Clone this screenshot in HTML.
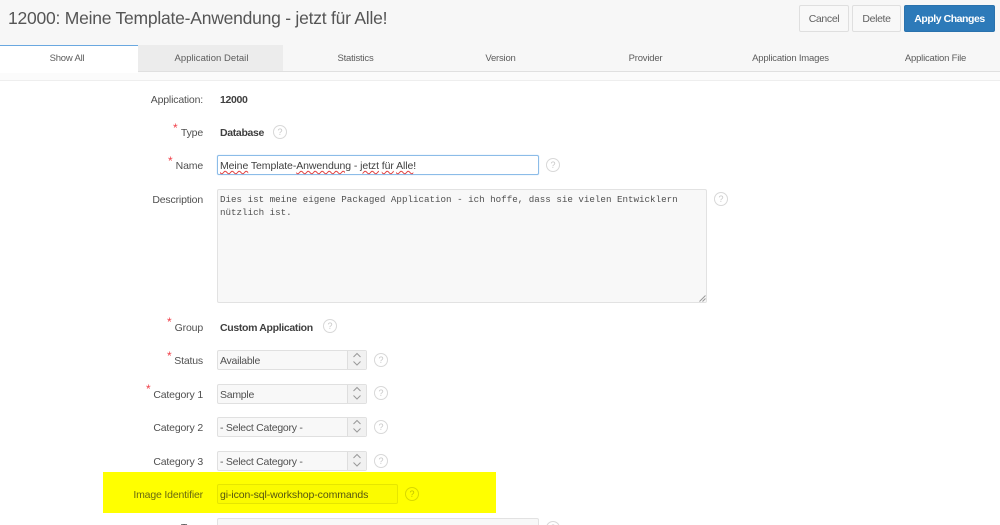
<!DOCTYPE html>
<html><head><meta charset="utf-8"><style>
html,body{margin:0;padding:0;width:1000px;height:525px;overflow:hidden;background:#fff}
body{font-family:"Liberation Sans",sans-serif;color:#404040;font-size:10.5px}
#w{left:0;top:0;width:1000px;height:525px;overflow:hidden;background:#fff;filter:blur(.35px)}
div{position:absolute;box-sizing:border-box;white-space:nowrap}
.tab{top:46px;height:25px;line-height:26px;text-align:center;font-size:9.5px;letter-spacing:-.2px;color:#5c5c5c}
.l{left:50px;width:153px;text-align:right;font-size:10.5px;letter-spacing:-.17px;color:#505050;height:14px;line-height:14px}
.v{left:220px;font-weight:bold;font-size:10.5px;letter-spacing:-.33px;color:#404040;height:14px;line-height:14px}
.s{left:217px;width:150px;height:20px;background:#f8f8f8;border:1px solid #e0e0e0;border-radius:2px;line-height:20px;padding-left:2px;font-size:10.5px;letter-spacing:-.26px;color:#505050}
.s:after{content:"";position:absolute;right:0;top:0;bottom:0;width:18px;background:#f1f1f1;border-left:1px solid #dedede}
.h{width:14px;height:14px;border:1px solid #d8d8d8;border-radius:50%;text-align:center;line-height:12px;font-size:9px;color:#c8c8c8}
.r{color:#f0404a;font-size:12px;line-height:12px;height:8px}
.b{top:5px;height:27px;border:1px solid #dfdfdf;border-radius:2px;background:#f8f8f8;text-align:center;line-height:26px;font-size:10.5px;letter-spacing:-.35px;color:#606060}
svg{position:absolute;overflow:visible}
u{text-decoration:underline wavy #e04040 1px;text-underline-offset:1px}
</style></head><body><div id="w">
<div style="left:0;top:0;width:1000px;height:72px;background:#f7f7f7"></div>
<div style="left:8px;top:7px;font-size:17.5px;line-height:22px;color:#555;letter-spacing:-.235px">12000: Meine Template-Anwendung - jetzt für Alle!</div>
<div class="b" style="left:799px;width:50px">Cancel</div>
<div class="b" style="left:852px;width:49px">Delete</div>
<div class="b" style="left:904px;width:91px;background:#2d7ab9;border-color:#2a72ad;color:#fff;font-weight:bold;letter-spacing:-.46px">Apply Changes</div>

<div style="left:138px;top:45px;width:145px;height:26px;background:#ececec"></div>
<div style="left:0;top:71px;width:1000px;height:1px;background:#e0e0e0"></div>
<div style="left:0;top:72px;width:1000px;height:8px;background:#fbfbfb"></div>
<div style="left:0;top:80px;width:1000px;height:1px;background:#eeeeee"></div>
<div style="left:0;top:45px;width:138px;height:28px;background:#fff;border-top:1px solid #6aa8e0"></div>
<div class="tab" style="left:0;width:134px">Show All</div>
<div class="tab" style="left:139px;width:145px;letter-spacing:.03px">Application Detail</div>
<div class="tab" style="left:283px;width:145px">Statistics</div>
<div class="tab" style="left:428px;width:145px">Version</div>
<div class="tab" style="left:573px;width:145px">Provider</div>
<div class="tab" style="left:718px;width:145px">Application Images</div>
<div class="tab" style="left:863px;width:145px">Application File</div>

<div class="l" style="top:93px">Application:</div><div class="v" style="top:93px">12000</div>
<div class="r" style="left:173px;top:122px">*</div><div class="l" style="top:126px">Type</div><div class="v" style="top:126px">Database</div><div class="h" style="left:273px;top:125px">?</div>
<div class="r" style="left:168px;top:155px">*</div><div class="l" style="top:159px">Name</div>
<div style="left:217px;top:155px;width:322px;height:20px;border:1px solid #8cbce8;border-radius:2px;background:#fff;line-height:20px;padding-left:2px;font-size:10.5px;letter-spacing:-.08px;color:#404040;box-shadow:0 0 1px #a8cdf0"><u>Meine</u> Template-<u>Anwendung</u> - <u>jetzt</u> <u>für</u> <u>Alle</u>!</div>
<div class="h" style="left:546px;top:158px">?</div>

<div class="l" style="top:193px">Description</div>
<div style="left:217px;top:189px;width:490px;height:114px;background:#f8f8f8;border:1px solid #e2e2e2;border-radius:2px"></div>
<div style="left:220px;top:192.5px;font-family:'Liberation Mono',monospace;font-size:9.2px;line-height:13.5px;color:#505050">Dies ist meine eigene Packaged Application - ich hoffe, dass sie vielen Entwicklern<br>nützlich ist.</div>
<svg style="left:699px;top:295px" width="7" height="7"><path d="M0.5 6.5L6.5 0.5M3.5 6.5L6.5 3.5" stroke="#999" stroke-width="1" fill="none"/></svg>
<div class="h" style="left:714px;top:192px">?</div>

<div class="r" style="left:167px;top:316px">*</div><div class="l" style="top:321px">Group</div><div class="v" style="top:321px">Custom Application</div><div class="h" style="left:323px;top:319px">?</div>

<div class="r" style="left:167px;top:350px">*</div><div class="l" style="top:354px">Status</div><div class="s" style="top:350px">Available</div><div class="h" style="left:374px;top:353px">?</div>
<div class="r" style="left:146px;top:383px">*</div><div class="l" style="top:388px">Category 1</div><div class="s" style="top:384px">Sample</div><div class="h" style="left:374px;top:386px">?</div>
<div class="l" style="top:421px">Category 2</div><div class="s" style="top:417px">- Select Category -</div><div class="h" style="left:374px;top:420px">?</div>
<div class="l" style="top:455px">Category 3</div><div class="s" style="top:451px">- Select Category -</div><div class="h" style="left:374px;top:454px">?</div>
<svg style="left:353px;top:350px;z-index:2" width="10" height="130" fill="none" stroke="#999" stroke-width="1"><path d="M.5 7L4 3.500L7.500 7M.5 11.500L4 15L7.500 11.500"/><path d="M.5 41L4 37.500L7.500 41M.5 45.500L4 49L7.500 45.500"/><path d="M.5 74L4 70.500L7.500 74M.5 78.500L4 82L7.500 78.500"/><path d="M.5 108L4 104.500L7.500 108M.5 112.500L4 116L7.500 112.500"/></svg>

<div style="left:103px;top:472px;width:393px;height:41px;background:#ffff00"></div>
<div class="l" style="top:488px;color:#6a6a10">Image Identifier</div>
<div style="left:217px;top:484px;width:181px;height:20px;border:1px solid #e6e600;border-radius:2px;background:#fbfb00;line-height:20px;padding-left:2px;font-size:10.5px;letter-spacing:-.1px;color:#555510">gi-icon-sql-workshop-commands</div>
<div class="h" style="left:405px;top:487px;border-color:#d8d800;color:#c0c000">?</div>

<div style="left:217px;top:518px;width:322px;height:20px;border:1px solid #e2e2e2;border-radius:2px;background:#f8f8f8"></div>
<div class="h" style="left:546px;top:521px">?</div>
<div class="l" style="top:521px">Type</div>
</div></body></html>
